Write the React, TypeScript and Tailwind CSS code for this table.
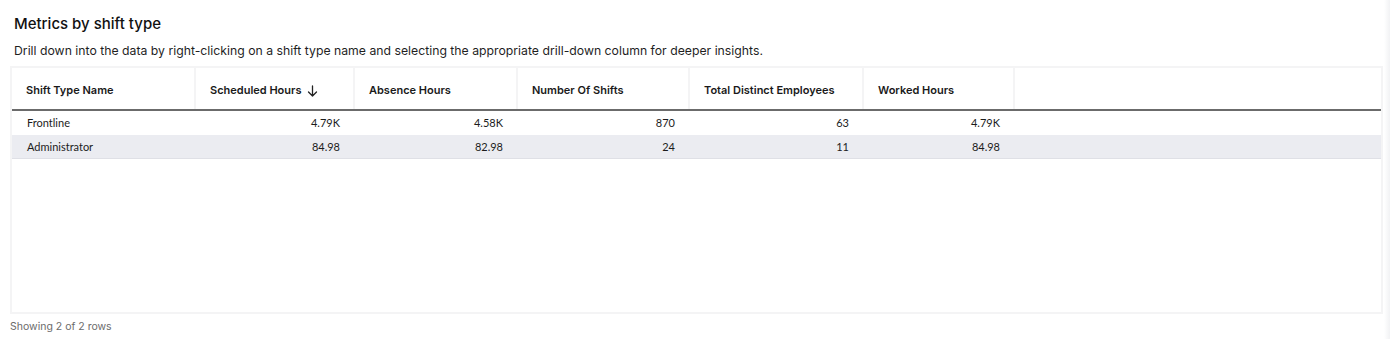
import React from "react";

const columns = [
   { label: "Shift Type Name", width: "w-[184px]", align: "left" },
   { label: "Scheduled Hours", width: "w-[159px]", align: "right", sorted: true },
   { label: "Absence Hours", width: "w-[163px]", align: "right" },
   { label: "Number Of Shifts", width: "w-[172px]", align: "right" },
   { label: "Total Distinct Employees", width: "w-[174px]", align: "right" },
   { label: "Worked Hours", width: "w-[151px]", align: "right" },
];

const rows = [
   ["Frontline", "4.79K", "4.58K", "870", "63", "4.79K"],
   ["Administrator", "84.98", "82.98", "24", "11", "84.98"],
];

const ArrowDown = () => (
   <svg width="11" height="12" viewBox="0 0 11 12" fill="none" className="ml-[6px]">
      <path d="M5.5 1v10M1.5 7l4 4 4-4" stroke="#222" strokeWidth="1.3" strokeLinecap="round" strokeLinejoin="round" />
   </svg>
);

const App = () => {
   return (
      <div className="flex w-[1390px] h-[339px] bg-white overflow-hidden">
         <main className="flex-1 flex flex-col pl-[10px] pr-[1px]">
            <h2 className="mt-[14px] ml-[4px] text-[15px] leading-[20px] font-medium text-[#111] font-['Inter',sans-serif]">
               Metrics by shift type
            </h2>
            <p className="mt-[9px] ml-[4px] text-[12.25px] leading-[16px] text-[#1f1f1f] font-['Inter',sans-serif]">
               Drill down into the data by right-clicking on a shift type name and selecting the appropriate drill-down column for deeper insights.
            </p>

            {/* table */}
            <div className="mt-[7px] h-[248px] border-2 border-[#f4f4f5] flex flex-col">
               <div className="flex h-[43px] border-b-2 border-[#6b6b6b]">
                  {columns.map((col) => (
                     <div
                        key={col.label}
                        className={`${col.width} shrink-0 flex items-center pt-[4px] pl-[14px] border-r-2 border-[#f4f4f5] text-[11px] font-semibold text-[#1a1a1a] font-['Inter',sans-serif]`}
                     >
                        {col.label}
                        {col.sorted && <ArrowDown />}
                     </div>
                  ))}
                  <div className="flex-1" />
               </div>

               {rows.map((row, i) => (
                  <div
                     key={row[0]}
                     className={`flex h-[24px] items-center pt-[1px] text-[11px] text-[#1c1c1c] font-['Lato',sans-serif] ${
                        i === 1 ? "bg-[#ebecf1] border-b border-[#dfe0e6]" : ""
                     }`}
                  >
                     {row.map((cell, j) => (
                        <div
                           key={j}
                           className={`${columns[j].width} shrink-0 ${
                              j === 0 ? "pl-[15px] text-left" : "pr-[15px] text-right"
                           }`}
                        >
                           {cell}
                        </div>
                     ))}
                     <div className="flex-1" />
                  </div>
               ))}
            </div>

            <div className="mt-[5px] text-[10.5px] text-[#6b6b6b] font-['Inter',sans-serif]">
               Showing 2 of 2 rows
            </div>
         </main>
         <div className="w-[6px] bg-gradient-to-r from-white to-[#f1f2f4]" />
      </div>
   );
};

export default App;
